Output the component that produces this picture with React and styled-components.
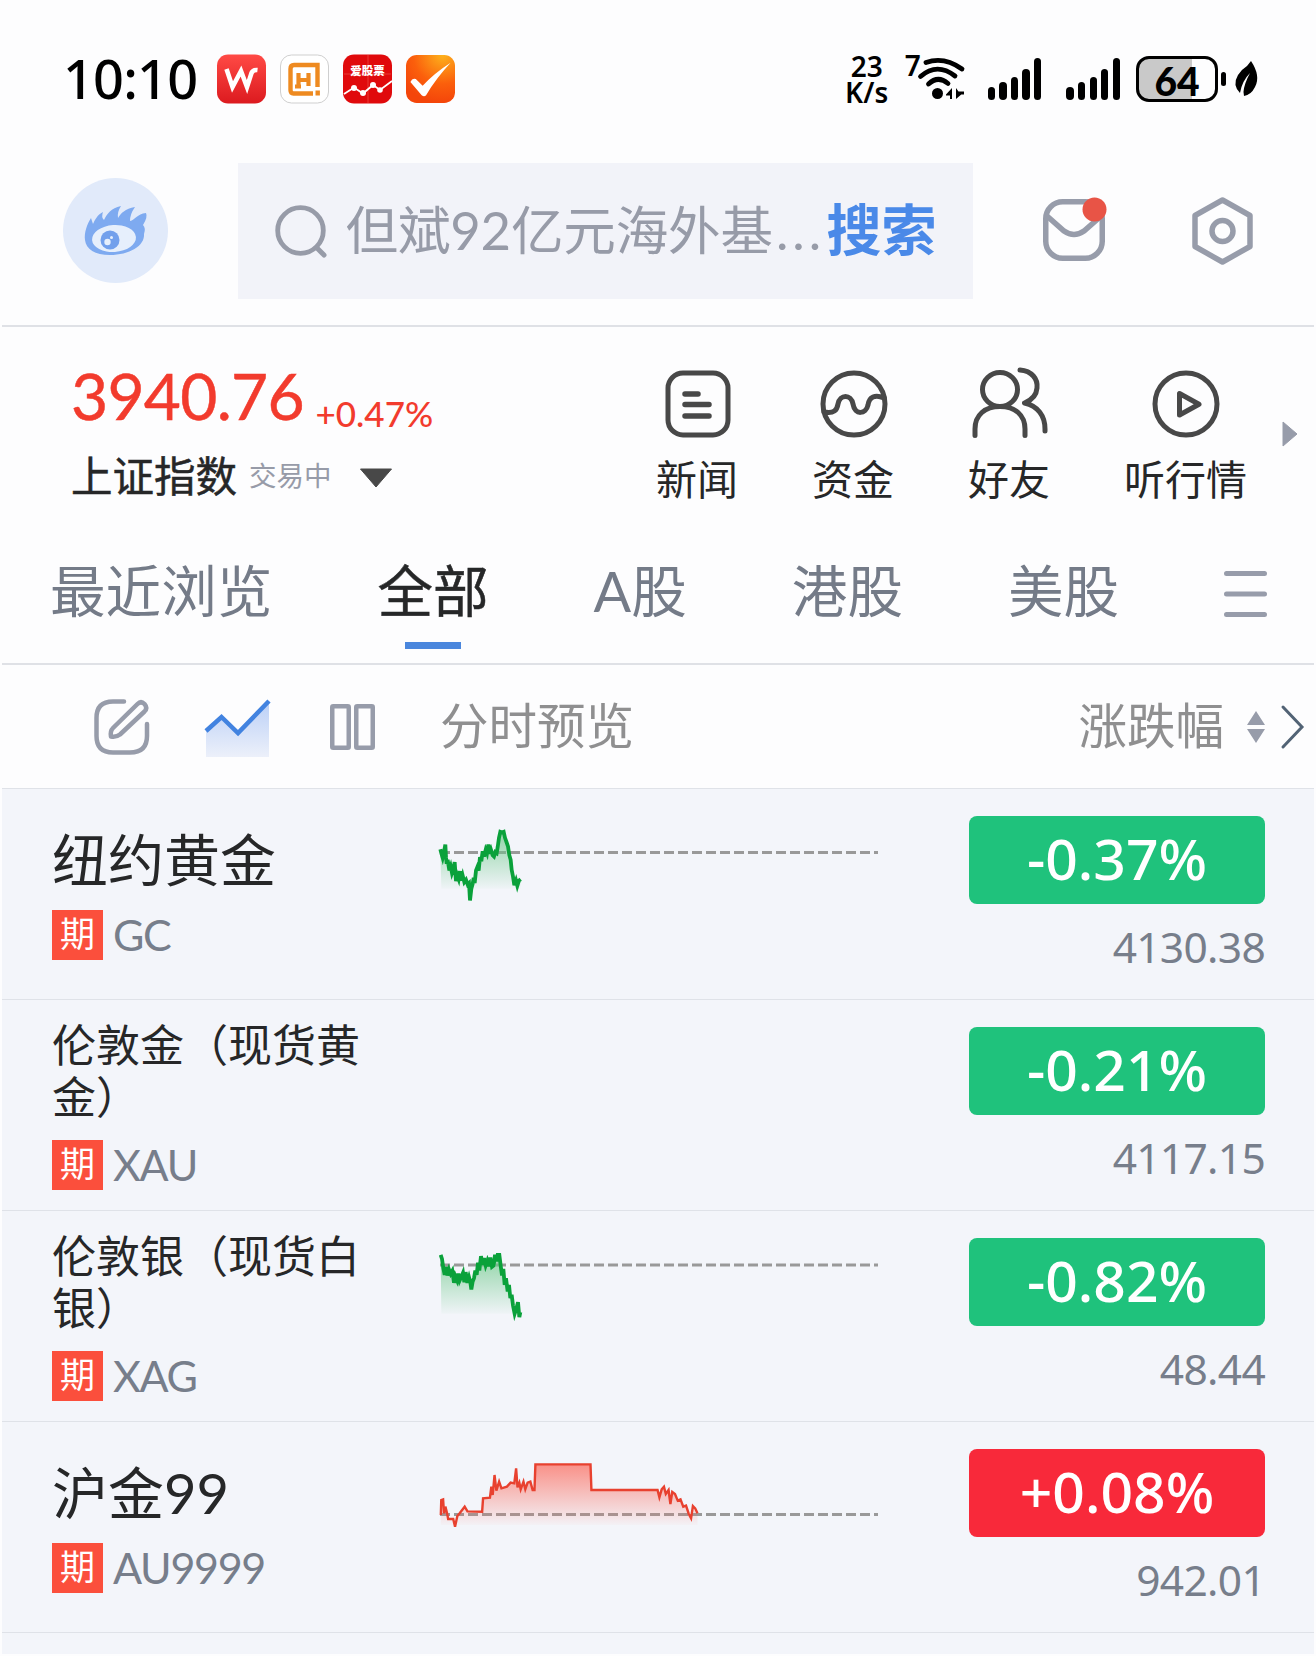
import React from "react";
import styled, { createGlobalStyle } from "styled-components";

const GlobalStyle = createGlobalStyle`
  * { box-sizing: border-box; }
  body {
    margin: 0;
    background: #fff;
    font-family: Lato, "Noto Sans CJK SC", sans-serif;
    color: #262728;
  }
  svg { display: block; flex: none; overflow: visible; }
`;

const Screen = styled.main`
  width: 1316px;
  height: 1656px;
  overflow: hidden;
  padding: 0 2px 2px;
  background: #fdfdfe;
  display: flex;
  flex-direction: column;
`;

/* ---------- status bar ---------- */

const StatusBar = styled.div`
  height: 163px;
  flex: none;
  padding: 53px 56px 0 61px;
  display: flex;
  justify-content: space-between;
  align-items: flex-start;
  color: #000;
  font-family: "Noto Sans", sans-serif;
`;

const StatusGroup = styled.div`
  display: flex;
  align-items: center;
  height: 52px;
`;

const Clock = styled.div`
  width: 154px;
  padding-bottom: 3px;
  font-size: 54px;
  font-weight: 500;
  line-height: 50px;
  letter-spacing: -0.8px;
  white-space: nowrap;
`;

const AppIcons = styled.div`
  display: flex;
  gap: 14px;
`;

const Speed = styled.div`
  width: 46px;
  font-size: 28px;
  font-weight: 600;
  text-align: center;
  white-space: nowrap;
`;

const SpeedLine = styled.div`
  height: 26px;
  line-height: 26px;
`;

const WifiGroup = styled.div`
  display: flex;
  margin-left: 15px;
  height: 44px;
`;

const WifiBand = styled.span`
  width: 13px;
  font-size: 28px;
  font-weight: 600;
  line-height: 16px;
`;

const Signal = styled.div`
  display: flex;
  align-items: flex-end;
  gap: 4.3px;
  height: 42px;
  margin-left: ${(p) => p.$gap}px;
`;

const SignalBar = styled.i`
  width: 7.3px;
  height: ${(p) => p.$h}px;
  border-radius: 4px;
  background: #000;
`;

const Battery = styled.div`
  width: 82px;
  height: 46px;
  margin-left: 16px;
  border: 3.5px solid #000;
  border-radius: 13px;
  background: linear-gradient(90deg, #c9c9c9 70%, #fdfdfe 70%);
  font-family: Lato, sans-serif;
  font-size: 39px;
  font-weight: 900;
  line-height: 44px;
  text-align: center;
`;

const BatteryNub = styled.i`
  width: 5px;
  height: 14px;
  margin: 0 9px 0 3px;
  border-radius: 3px;
  background: #000;
`;

/* ---------- search header ---------- */

const Header = styled.header`
  height: 164px;
  flex: none;
  border-bottom: 2px solid #dfe1e6;
  padding-left: 61px;
  display: flex;
  align-items: flex-start;
`;

const Avatar = styled.div`
  width: 105px;
  height: 105px;
  margin: 15px 70px 0 0;
  border-radius: 50%;
  background: #e1eafa;
  display: grid;
  place-items: center;
`;

const SearchBox = styled.div`
  width: 735px;
  height: 136px;
  padding: 0 36px 0 37px;
  background: #f2f3f9;
  display: flex;
  align-items: center;
`;

const SearchHint = styled.span`
  width: 481px;
  margin-left: 18.5px;
  padding-bottom: 3px;
  color: #979ba8;
  font-size: 52.6px;
  line-height: 70px;
  letter-spacing: -0.2px;
  white-space: nowrap;
`;

const Dots = styled.span`
  margin-left: 3px;
  letter-spacing: 4px;
`;

const SearchButton = styled.span`
  padding-bottom: 4px;
  color: #4a89e8;
  font-size: 55px;
  font-weight: 700;
  line-height: 70px;
  white-space: nowrap;
`;

const HeaderActions = styled.div`
  height: 135px;
  margin-left: 70px;
  display: flex;
  align-items: center;
  gap: 87px;
`;

/* ---------- index summary ---------- */

const Summary = styled.section`
  height: 214px;
  flex: none;
  padding: 0 16px 0 69px;
  display: flex;
  justify-content: space-between;
`;

const IndexBlock = styled.div`
  padding-top: 29px;
`;

const IndexRow = styled.div`
  display: flex;
  align-items: center;
  color: #f23b2d;
`;

const IndexValue = styled.span`
  width: 244.5px;
  font-size: 64px;
  line-height: 80px;
  letter-spacing: -0.7px;
  white-space: nowrap;
  -webkit-text-stroke: 0.5px currentColor;
`;

const IndexChange = styled.span`
  padding-top: 33px;
  font-size: 35px;
  font-weight: 500;
  line-height: 36px;
  white-space: nowrap;
`;

const IndexNameRow = styled.div`
  display: flex;
  align-items: center;
  height: 60px;
  margin-top: 10px;
`;

const IndexName = styled.span`
  font-size: 41.5px;
  line-height: 60px;
  -webkit-text-stroke: 0.5px currentColor;
`;

const IndexState = styled.span`
  margin: 0 27px 0 12px;
  font-size: 27.5px;
  line-height: 60px;
  color: #979ba8;
`;

const Caret = styled.div`
  padding-top: 3px;
`;

const Shortcuts = styled.nav`
  display: flex;
  align-items: flex-start;
  gap: 73px;
`;

const Shortcut = styled.div`
  display: flex;
  flex-direction: column;
  align-items: center;
  padding-top: 40px;
  font-size: 41px;
  line-height: 60px;
`;

const ShortcutLabel = styled.span`
  margin: 11px 1px 0 0;
  white-space: nowrap;
`;

const More = styled.div`
  margin: 94px 0 0 -39px;
`;

/* ---------- tabs ---------- */

const Tabs = styled.nav`
  height: 124px;
  flex: none;
  padding: 15px 0 0 48px;
  border-bottom: 2px solid #dfe1e6;
  display: flex;
  gap: 105px;
`;

const Tab = styled.div`
  display: flex;
  flex-direction: column;
  align-items: center;
  color: ${(p) => (p.$active ? "#262728" : "#747b88")};
  font-size: 55.6px;
  line-height: 70px;
  white-space: nowrap;
  -webkit-text-stroke: ${(p) => (p.$active ? "0.5px" : "0")} currentColor;
  &::after {
    content: "";
    width: 56px;
    height: 7px;
    margin-top: 16px;
    background: ${(p) => (p.$active ? "#4a86dd" : "transparent")};
  }
`;

const TabMenu = styled.div`
  padding-top: 15px;
`;

/* ---------- list toolbar ---------- */

const ListHeader = styled.div`
  height: 123px;
  flex: none;
  padding: 0 9px 0 92px;
  display: flex;
  align-items: center;
  color: #8f8f90;
  font-size: 48.5px;
  line-height: 66px;
`;

const ToolIcon = styled.div`
  width: ${(p) => p.$w}px;
  padding-top: ${(p) => p.$drop || 0}px;
`;

const PreviewLabel = styled.span`
  padding-bottom: 4px;
`;

const SortLabel = styled(PreviewLabel)`
  margin-left: auto;
`;

const SortArrows = styled.div`
  margin: 0 16px 0 23px;
`;

/* ---------- quotes ---------- */

const Quotes = styled.div`
  flex: 1;
  background: #f3f5fa;
  overflow: hidden;
`;

const Row = styled.div`
  height: 211px;
  border-top: 1px solid #dfe2e8;
  padding-left: 50px;
  display: grid;
  grid-template-columns: 388px 438px 296px;
`;

const Info = styled.div`
  display: flex;
  flex-direction: column;
  justify-content: center;
  gap: 17px;
  padding-bottom: 2px;
`;

const Name = styled.div`
  width: 320px;
  font-size: ${(p) => (p.$small ? 44 : 56)}px;
  line-height: ${(p) => (p.$small ? 52 : 66)}px;
`;

const CodeRow = styled.div`
  display: flex;
  align-items: center;
  height: 50px;
  color: #777e8b;
  font-size: 43px;
  line-height: 48px;
  letter-spacing: -1.3px;
`;

const Tag = styled.span`
  width: 51px;
  height: 50px;
  margin-right: 10px;
  background: #fb4f3c;
  color: #fff;
  font-size: 35px;
  line-height: 47px;
  letter-spacing: 0;
  text-align: center;
`;

const Quote = styled.div`
  margin-left: 91px;
  padding-top: 27px;
  width: 296px;
  font-family: "Noto Sans", sans-serif;
`;

const Change = styled.div`
  height: 88px;
  border-radius: 8px;
  background: ${(p) => (p.$up ? "#f8293a" : "#1fc27c")};
  color: #fff;
  font-size: 57px;
  font-weight: 500;
  line-height: 84px;
  text-align: center;
`;

const Price = styled.div`
  margin-top: 17px;
  color: #777e8b;
  font-size: 42.5px;
  line-height: 52px;
  letter-spacing: -0.7px;
  text-align: right;
`;

/* ---------- app icons ---------- */

const WpsIcon = () => (
  <svg width="49" height="50" viewBox="0 0 49 50">
    <defs>
      <linearGradient id="wps" x1="0" y1="0" x2="0" y2="1">
        <stop offset="0" stopColor="#ff4a45" />
        <stop offset="1" stopColor="#dc1a1f" />
      </linearGradient>
    </defs>
    <rect y=".5" width="49" height="49" rx="11" fill="url(#wps)" />
    <path d="M9.500 15 L15.500 33 L24 17 L30 33 L34.500 19 Q36 15.500 40.500 16" fill="none" stroke="#fff" strokeWidth="4.600" />
  </svg>
);

const HIcon = () => (
  <svg width="49" height="50" viewBox="0 0 49 50">
    <rect x=".5" y="1" width="48" height="48" rx="11" fill="#fff" stroke="#cfcfcf" />
    <path d="M33 39.500 H13.500 Q10.500 39.500 10.500 36 V15 Q10.500 11 14 11 H37.500 V33" fill="none" stroke="#ee8a20" strokeWidth="4.400" />
    <path d="M18.500 19 V32 M28.500 19 V32 M18.500 26 H28.500 M15 32.500 H21" fill="none" stroke="#ee8a20" strokeWidth="4.200" />
    <rect x="35.500" y="36.500" width="4.400" height="5" fill="#ee8a20" />
  </svg>
);

const StockIconLabel = styled.text`
  font-family: "Noto Sans CJK SC", sans-serif;
  font-size: 11.5px;
  font-weight: 900;
  fill: #fff;
`;

const StockIcon = () => (
  <svg width="49" height="50" viewBox="0 0 49 50">
    <rect y=".5" width="49" height="49" rx="11" fill="#e00a0c" />
    <path d="M25 1 V49 M1 20 H48" stroke="#ee5a50" strokeWidth=".6" />
    <StockIconLabel x="7.300" y="20.500">爱股票</StockIconLabel>
    <path d="M1 40 L11 33.500 L20 39.500 L30 31 L37 36 L49 27" fill="none" stroke="#fff" strokeWidth="1.800" />
    <g fill="#fff">
      <circle cx="11" cy="34" r="3" />
      <circle cx="20" cy="39" r="3" />
      <circle cx="30" cy="31" r="3" />
      <circle cx="37" cy="36" r="2.800" />
    </g>
  </svg>
);

const CheckIcon = () => (
  <svg width="49" height="50" viewBox="0 0 50 50">
    <defs>
      <radialGradient id="chk" cx=".75" cy="0" r="1">
        <stop offset="0" stopColor="#fdb21c" />
        <stop offset=".6" stopColor="#fb5f0c" />
        <stop offset="1" stopColor="#f4450a" />
      </radialGradient>
    </defs>
    <rect y=".5" width="50" height="49" rx="11" fill="url(#chk)" />
    <path d="M4.500 28 Q6.500 23.500 10 25 L17 32 Q29 19 45.500 8.500 Q31 24 20.500 41.500 Q18.500 43.500 16 41.500 Z" fill="#fff" />
  </svg>
);

const WifiIcon = () => (
  <svg width="48" height="44" viewBox="0 0 48 44">
    <g fill="none" stroke="#000" strokeWidth="4.800" strokeLinecap="round">
      <path d="M8 5.500 Q26 -1 44 12" />
      <path d="M2.500 19.500 Q19 5 37 19" />
      <path d="M10.500 27 Q20 18 30 26.500" />
    </g>
    <circle cx="19.500" cy="36.500" r="5.500" />
    <path d="M28 37.500 L34 31 V42 H32 V38.500 H28 Z M38 31 V42 L40.500 37.500 H46 V34.500 H40.500 Z M38 42 L45 36 H40 Z" />
  </svg>
);

const LeafIcon = () => (
  <svg width="23" height="36" viewBox="0 0 23 36">
    <path d="M16 0 Q26 15 20 26 Q16 34 9 35 L8.500 31 Q9 23 15 12 Q7 20 5 32 Q-3 24 3 14 Q7 8 12 5 Z" />
  </svg>
);

/* ---------- interface icons ---------- */

const EyeIcon = () => (
  <svg width="64" height="50" viewBox="0 0 64 50">
    <path
      d="M1 34 C0 27 3 18 7 12 Q8 15 9 18 C11 14 13 9 19 6 Q17 11 20 14 C23 8 27 2 37 0 Q33 6 34 12 C37 7 41 3 51 1 Q46 8 46 15 C51 14 53 8 62 7 Q64 11 59 19 Q62 22 60 28 C61 40 45 49 26 49 C11 49 2 43 1 34 Z"
      fill="#7eaaf0"
    />
    <ellipse cx="30" cy="32.500" rx="22" ry="13.500" fill="#e6effc" transform="rotate(-4 30 32.500)" />
    <circle cx="26" cy="34" r="9.500" fill="#72a0ec" />
    <circle cx="23.500" cy="36" r="3.200" fill="#e6effc" />
    <circle cx="27.500" cy="31.500" r="1.500" fill="#e6effc" />
  </svg>
);

const SearchIcon = () => (
  <svg width="52" height="54" viewBox="0 0 52 54">
    <g fill="none" stroke="#979ba8" strokeWidth="4.800" strokeLinecap="round">
      <circle cx="25.500" cy="26.500" r="22.800" />
      <path d="M42 44 L49 51" strokeWidth="5" />
    </g>
  </svg>
);

const MailIcon = () => (
  <svg width="62" height="70" viewBox="0 0 62 70">
    <g fill="none" stroke="#979caa" strokeWidth="5.500">
      <rect x="2.750" y="5.750" width="56.500" height="56.500" rx="17" />
      <path d="M4 20 L21 35 Q31 42 41 35 L57 21" />
    </g>
    <circle cx="51.500" cy="13.500" r="12" fill="#e85446" />
  </svg>
);

const SettingsIcon = () => (
  <svg width="61" height="70" viewBox="0 0 61 70">
    <g fill="none" stroke="#979caa" strokeWidth="5.500" strokeLinejoin="round">
      <path d="M30.500 4 L58 19.500 V50.500 L30.500 66 L3 50.500 V19.500 Z" />
      <circle cx="30.500" cy="35" r="10.500" />
    </g>
  </svg>
);

const lineIcon = { fill: "none", stroke: "#484848", strokeWidth: 5, strokeLinecap: "round", strokeLinejoin: "round" };

const NewsIcon = () => (
  <svg width="66" height="72" viewBox="0 0 66 72" {...lineIcon}>
    <rect x="3" y="6" width="60" height="62" rx="15" />
    <path d="M20 27 H33 M20 37.500 H44 M20 49 H44" strokeWidth="5.500" />
  </svg>
);

const FundsIcon = () => (
  <svg width="68" height="72" viewBox="0 0 68 72" {...lineIcon}>
    <circle cx="34" cy="37" r="31" />
    <path d="M4 45 C14 47 17 43 18 37 C20 27 31 27 33 37 C35 49 46 47 48 38 C49 30 55 27 64 31" />
  </svg>
);

const FriendsIcon = () => (
  <svg width="76" height="72" viewBox="0 0 76 72" {...lineIcon}>
    <ellipse cx="28" cy="22.500" rx="17.500" ry="17" />
    <path d="M3 68.500 V62 C3 48 13 39.500 28 39.500 C43 39.500 53 48 53 62 V68.500" />
    <path d="M48 3 C60 4 66 12 65 21 C64.500 28 60 33 52.500 36 C66 39 73 49 73 62 V64" />
  </svg>
);

const ListenIcon = () => (
  <svg width="68" height="72" viewBox="0 0 68 72" {...lineIcon}>
    <circle cx="34" cy="37" r="31" />
    <path d="M27.500 26.500 V48 L47 37.200 Z" />
  </svg>
);

const EditIcon = () => (
  <svg width="56" height="56" viewBox="0 0 56 56">
    <g fill="none" stroke="#979caa" strokeWidth="4.500" strokeLinecap="round" strokeLinejoin="round">
      <path d="M30 2.500 H19 Q2.500 2.500 2.500 19 V37 Q2.500 53.500 19 53.500 H36 Q53 53.500 53 37 V25" />
      <path d="M43.500 5 Q47 1.500 50.500 5 Q54 9 50.500 12.500 L26 35.500 Q22 38.500 17 37.500 Q16 32 19 29 Z" />
    </g>
  </svg>
);

const TrendIcon = () => (
  <svg width="63" height="58" viewBox="0 0 63 58">
    <defs>
      <linearGradient id="trend" x1="0" y1="0" x2="0" y2="1">
        <stop offset="0" stopColor="#a9c4f5" />
        <stop offset="1" stopColor="#e8edf9" />
      </linearGradient>
    </defs>
    <path d="M0 32 L15.500 18 L32 34 L63 2 V58 H0 Z" fill="url(#trend)" opacity=".8" />
    <path d="M0 32 L15.500 18 L32 34 L63 2" fill="none" stroke="#4283e0" strokeWidth="4.500" />
  </svg>
);

const ColumnsIcon = () => (
  <svg width="45" height="46" viewBox="0 0 45 46">
    <g fill="none" stroke="#979caa" strokeWidth="4.500">
      <rect x="2.250" y="2.250" width="16.500" height="41.500" rx="1" />
      <rect x="26.250" y="2.250" width="16.500" height="41.500" rx="1" />
    </g>
  </svg>
);

/* ---------- spark charts ---------- */

const DASH_Y = { gold: 64, silver: 54.5, sh: 93 };

const goldLine =
  "19,86 22,98 26,112 30,95 34,72 36,110 38,130 41,118 46,150 50,138 54,158 57,150 62,125 66,182 70,165 74,176 78,152 82,180 86,165 91,185 96,178 101,192 105,188 108,240 112,205 116,190 119,172 122,188 126,150 130,140 134,150 138,110 142,122 146,92 150,108 155,88 159,98 163,72 167,100 171,88 176,104 180,108 184,95 188,98 191,80 195,52 199,34 204,36 209,34 213,52 218,66 222,78 226,104 230,118 233,148 237,168 241,194 246,180 250,196 255,180 260,176";

const silverLine =
  "20,28 24,40 28,68 32,88 36,64 40,90 45,72 50,85 55,76 60,112 64,92 69,104 73,84 77,105 82,94 87,82 91,110 95,80 100,112 105,95 109,110 112,132 116,108 120,98 124,75 128,88 132,52 136,75 141,32 146,58 150,38 155,60 160,46 165,62 169,36 174,64 179,60 183,28 187,48 191,28 196,28 200,60 204,90 208,70 212,118 216,98 221,138 225,118 229,158 233,148 237,180 242,205 247,190 252,170 256,215 259,200";

const shLine =
  "960,525 961,480 965,478 967,520 970,500 974,522 976,537 987,537 991,560 996,528 1001,520 1012,500 1018,514 1050,515 1052,475 1067,473 1070,440 1073,465 1077,405 1081,452 1087,425 1092,445 1104,440 1112,428 1120,430 1124,385 1127,442 1131,428 1134,448 1140,425 1144,448 1149,428 1155,425 1160,450 1164,450 1166,373 1286,373 1288,450 1432,450 1436,472 1441,448 1446,440 1450,462 1456,450 1460,492 1464,456 1470,462 1476,482 1482,478 1488,500 1494,497 1500,522 1505,535 1509,498 1514,505 1519,520";

const chartSpecs = {
  gold: { points: goldLine, transform: "translate(-6 31.5) scale(.33333)", x0: 22, x1: 260, base: 205, color: "#0aa13a", fill: "#6cc888", top: 30, weight: 3.8 },
  silver: { points: silverLine, transform: "translate(-6 34.5) scale(.33333)", x0: 22, x1: 259, base: 205, color: "#0aa13a", fill: "#6cc888", top: 25, weight: 3.8 },
  sh: { points: shLine, transform: "translate(-440 -82) scale(.45918 .33333)", x0: 960, x1: 1519, base: 555, color: "#e8412f", fill: "#fb6f62", top: 373, weight: 2.4 },
};

const Chart = ({ kind }) => {
  const c = chartSpecs[kind];
  return (
    <svg width="438" height="210" viewBox="0 0 438 210">
      <defs>
        <linearGradient id={"fill-" + kind} gradientUnits="userSpaceOnUse" x1="0" x2="0" y1={c.top} y2={c.base}>
          <stop offset="0" stopColor={c.fill} stopOpacity=".75" />
          <stop offset="1" stopColor={c.fill} stopOpacity="0.03" />
        </linearGradient>
      </defs>
      <path d={`M0 ${DASH_Y[kind] - 0.5} H438`} stroke="#999" strokeWidth="3.200" strokeDasharray="10 4" />
      <g transform={c.transform}>
        <polygon points={`${c.x0},${c.base} ${c.points} ${c.x1},${c.base}`} fill={`url(#fill-${kind})`} />
        <polyline points={c.points} fill="none" stroke={c.color} strokeWidth={c.weight} vectorEffect="non-scaling-stroke" />
      </g>
    </svg>
  );
};

const quotes = [
  { name: "纽约黄金", code: "GC", chart: "gold", change: "-0.37%", price: "4130.38" },
  { name: "伦敦金（现货黄金）", small: true, code: "XAU", change: "-0.21%", price: "4117.15" },
  { name: "伦敦银（现货白银）", small: true, code: "XAG", chart: "silver", change: "-0.82%", price: "48.44" },
  { name: "沪金99", code: "AU9999", chart: "sh", change: "+0.08%", price: "942.01", up: true },
];

const shortcuts = [
  { label: "新闻", Icon: NewsIcon },
  { label: "资金", Icon: FundsIcon },
  { label: "好友", Icon: FriendsIcon },
  { label: "听行情", Icon: ListenIcon },
];

const tabs = ["最近浏览", "全部", "A股", "港股", "美股"];
const bars = [13, 18, 23, 31, 42];

export default function App() {
  return (
    <>
      <GlobalStyle />
      <Screen>
        <StatusBar>
          <StatusGroup>
            <Clock>10:10</Clock>
            <AppIcons>
              <WpsIcon />
              <HIcon />
              <StockIcon />
              <CheckIcon />
            </AppIcons>
          </StatusGroup>
          <StatusGroup>
            <Speed>
              <SpeedLine>23</SpeedLine>
              <SpeedLine>K/s</SpeedLine>
            </Speed>
            <WifiGroup>
              <WifiBand>7</WifiBand>
              <WifiIcon />
            </WifiGroup>
            <Signal $gap={22}>{bars.map((h) => <SignalBar key={h} $h={h} />)}</Signal>
            <Signal $gap={25}>{bars.map((h) => <SignalBar key={h} $h={h} />)}</Signal>
            <Battery>64</Battery>
            <BatteryNub />
            <LeafIcon />
          </StatusGroup>
        </StatusBar>

        <Header>
          <Avatar><EyeIcon /></Avatar>
          <SearchBox>
            <SearchIcon />
            <SearchHint>但斌92亿元海外基<Dots>...</Dots></SearchHint>
            <SearchButton>搜索</SearchButton>
          </SearchBox>
          <HeaderActions>
            <MailIcon />
            <SettingsIcon />
          </HeaderActions>
        </Header>

        <Summary>
          <IndexBlock>
            <IndexRow>
              <IndexValue>3940.76</IndexValue>
              <IndexChange>+0.47%</IndexChange>
            </IndexRow>
            <IndexNameRow>
              <IndexName>上证指数</IndexName>
              <IndexState>交易中</IndexState>
              <Caret>
                <svg width="34" height="20" viewBox="0 0 34 20"><path d="M1.500 1 H32.500 L17 19 Z" fill="#484848" stroke="#484848" strokeLinejoin="round" /></svg>
              </Caret>
            </IndexNameRow>
          </IndexBlock>
          <Shortcuts>
            {shortcuts.map(({ label, Icon }) => (
              <Shortcut key={label}>
                <Icon />
                <ShortcutLabel>{label}</ShortcutLabel>
              </Shortcut>
            ))}
            <More><svg width="16" height="26" viewBox="0 0 16 26"><path d="M1 1 L15 13 L1 25 Z" fill="#979caa" stroke="#979caa" strokeLinejoin="round" /></svg></More>
          </Shortcuts>
        </Summary>

        <Tabs>
          {tabs.map((t) => <Tab key={t} $active={t === "全部"}>{t}</Tab>)}
          <TabMenu>
            <svg width="43" height="46" viewBox="0 0 43 46"><path d="M2.500 2.500 H40.500 M2.500 23 H40.500 M2.500 43.500 H40.500" stroke="#979caa" strokeWidth="5" strokeLinecap="round" /></svg>
          </TabMenu>
        </Tabs>

        <ListHeader>
          <ToolIcon $w={112}><EditIcon /></ToolIcon>
          <ToolIcon $w={124} $drop={2}><TrendIcon /></ToolIcon>
          <ToolIcon $w={110}><ColumnsIcon /></ToolIcon>
          <PreviewLabel>分时预览</PreviewLabel>
          <SortLabel>涨跌幅</SortLabel>
          <SortArrows>
            <svg width="18" height="32" viewBox="0 0 18 32"><path d="M9 0 L18 14 H0 Z M0 18 H18 L9 32 Z" fill="#979caa" /></svg>
          </SortArrows>
          <svg width="24" height="44" viewBox="0 0 24 44"><path d="M2 2 L21 22 L2 42" fill="none" stroke="#526375" strokeWidth="3" strokeLinecap="round" /></svg>
        </ListHeader>

        <Quotes>
          {quotes.map((q) => (
            <Row key={q.code}>
              <Info>
                <Name $small={q.small}>{q.name}</Name>
                <CodeRow><Tag>期</Tag>{q.code}</CodeRow>
              </Info>
              <div>{q.chart && <Chart kind={q.chart} />}</div>
              <Quote>
                <Change $up={q.up}>{q.change}</Change>
                <Price>{q.price}</Price>
              </Quote>
            </Row>
          ))}
          <Row />
        </Quotes>
      </Screen>
    </>
  );
}
